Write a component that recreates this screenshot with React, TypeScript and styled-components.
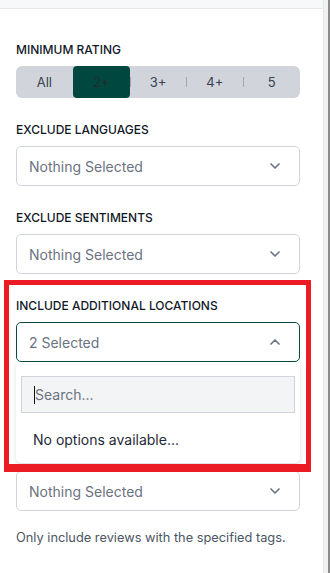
import React, { useState } from "react";
import styled, { createGlobalStyle } from "styled-components";
import { ChevronDown, ChevronUp } from "lucide-react";

const GlobalStyle = createGlobalStyle`
  html, body { margin: 0; padding: 0; background: #fff; }
  body { font-family: Inter, "Noto Sans", sans-serif; }
  * { box-sizing: border-box; }
`;

const ratings = ["All", "2+", "3+", "4+", "5"];

export default function App() {
  const [rating, setRating] = useState<string>("2+");

  return (
    <Page>
      <GlobalStyle />
      <Panel>
        <HeaderBand />
        <Content>
          <Section>
            <Label>Minimum Rating</Label>
            <Segmented>
              {ratings.map((r, i) => (
                <Segment
                  key={r}
                  $active={r === rating}
                  $divider={i > 0}
                  onClick={() => setRating(r)}
                >
                  {r}
                </Segment>
              ))}
            </Segmented>
          </Section>

          <Section>
            <Label>Exclude Languages</Label>
            <Select>
              <SelectText>Nothing Selected</SelectText>
              <ChevronDown size={16} strokeWidth={2.5} color="#6b7280" />
            </Select>
          </Section>

          <Section>
            <Label>Exclude Sentiments</Label>
            <Select>
              <SelectText>Nothing Selected</SelectText>
              <ChevronDown size={16} strokeWidth={2.5} color="#6b7280" />
            </Select>
          </Section>

          <Section>
            <Label>Include Additional Locations</Label>
            <SelectWrap>
              <Select $open>
                <SelectText>2 Selected</SelectText>
                <ChevronUp size={16} strokeWidth={2.5} color="#6b7280" />
              </Select>
              <Menu>
                <SearchBox>
                  <Caret />
                  <SearchInput placeholder="Search..." readOnly />
                </SearchBox>
                <Empty>No options available...</Empty>
              </Menu>
            </SelectWrap>
          </Section>

          <Section $spaced>
            <Label>Include Tags</Label>
            <Select>
              <SelectText>Nothing Selected</SelectText>
              <ChevronDown size={16} strokeWidth={2.5} color="#6b7280" />
            </Select>
            <Help>Only include reviews with the specified tags.</Help>
          </Section>
        </Content>
        <Highlight />
      </Panel>
      <Rail />
    </Page>
  );
}

const Page = styled.div`
  display: flex;
  height: 573px;
  overflow: hidden;
`;

const Panel = styled.div`
  position: relative;
  flex: 1;
  display: flex;
  flex-direction: column;
  background: #fff;
`;

const HeaderBand = styled.div`
  height: 9px;
  background: #f7f8fa;
  border-bottom: 1px solid #e5e7eb;
  flex-shrink: 0;
`;

const Content = styled.div`
  padding: 33px 23px 0 16px;
  display: flex;
  flex-direction: column;
  gap: 24px;
`;

const Section = styled.div<{ $spaced?: boolean }>`
  display: flex;
  flex-direction: column;
  margin-top: ${(p) => (p.$spaced ? "61px" : "0")};
`;

const Label = styled.div`
  font-size: 12px;
  line-height: 16px;
  font-weight: 500;
  color: #111827;
  text-transform: uppercase;
  margin-bottom: 8px;
`;

const Segmented = styled.div`
  display: grid;
  grid-template-columns: repeat(5, 1fr);
  height: 32px;
  background: #d1d5db;
  border-radius: 6px;
`;

const Segment = styled.div<{ $active: boolean; $divider: boolean }>`
  position: relative;
  display: flex;
  align-items: center;
  justify-content: center;
  font-size: 13px;
  color: ${(p) => (p.$active ? "#1f2d2a" : "#374151")};
  background: ${(p) => (p.$active ? "#00483f" : "transparent")};
  border-radius: ${(p) => (p.$active ? "4px" : "0")};
  cursor: pointer;

  &::before {
    content: "";
    display: ${(p) => (p.$divider && !p.$active ? "block" : "none")};
    position: absolute;
    left: 0;
    top: 11px;
    height: 10px;
    width: 1px;
    background: #a3a8b0;
  }
`;

const SelectWrap = styled.div`
  position: relative;
`;

const Select = styled.div<{ $open?: boolean }>`
  height: 40px;
  display: flex;
  align-items: center;
  justify-content: space-between;
  padding: 0 16px 0 12px;
  border: 1px solid ${(p) => (p.$open ? "#0b4a42" : "#d1d5db")};
  border-radius: 5px;
  background: #fff;
`;

const SelectText = styled.span`
  font-size: 14px;
  color: #6b7280;
`;

const Menu = styled.div`
  position: absolute;
  top: 100%;
  left: 0;
  right: 0;
  z-index: 5;
  height: 101px;
  padding: 14px 5px 0;
  background: #fff;
  border-radius: 0 0 5px 5px;
  box-shadow: 0 3px 6px rgba(0, 0, 0, 0.1), 0 1px 2px rgba(0, 0, 0, 0.06);
`;

const SearchBox = styled.div`
  position: relative;
  height: 37px;
  background: #f3f4f6;
  border: 1px solid #d1d5db;
`;

const Caret = styled.span`
  position: absolute;
  left: 12px;
  top: 9px;
  width: 1px;
  height: 18px;
  background: #111;
`;

const SearchInput = styled.input`
  width: 100%;
  height: 100%;
  border: none;
  outline: none;
  background: transparent;
  padding: 0 12px 0 13px;
  font-family: Inter, sans-serif;
  font-size: 14px;
  color: #111827;

  &::placeholder {
    color: #6b7280;
  }
`;

const Empty = styled.div`
  padding: 17px 0 0 12px;
  font-size: 14px;
  line-height: 20px;
  color: #1f2937;
`;

const Help = styled.div`
  margin-top: 19px;
  font-size: 12.8px;
  line-height: 16px;
  color: #4b5563;
`;

const Highlight = styled.div`
  position: absolute;
  left: 4px;
  top: 280px;
  width: 307px;
  height: 192px;
  border: 5px solid #ec1c24;
  border-bottom-width: 8px;
  pointer-events: none;
  z-index: 10;
`;

const Rail = styled.div`
  width: 7px;
  flex-shrink: 0;
  background: #f1f1f1;
  border-left: 1px solid #e8e8e8;
  border-right: 2px solid #8b8b8b;
`;
